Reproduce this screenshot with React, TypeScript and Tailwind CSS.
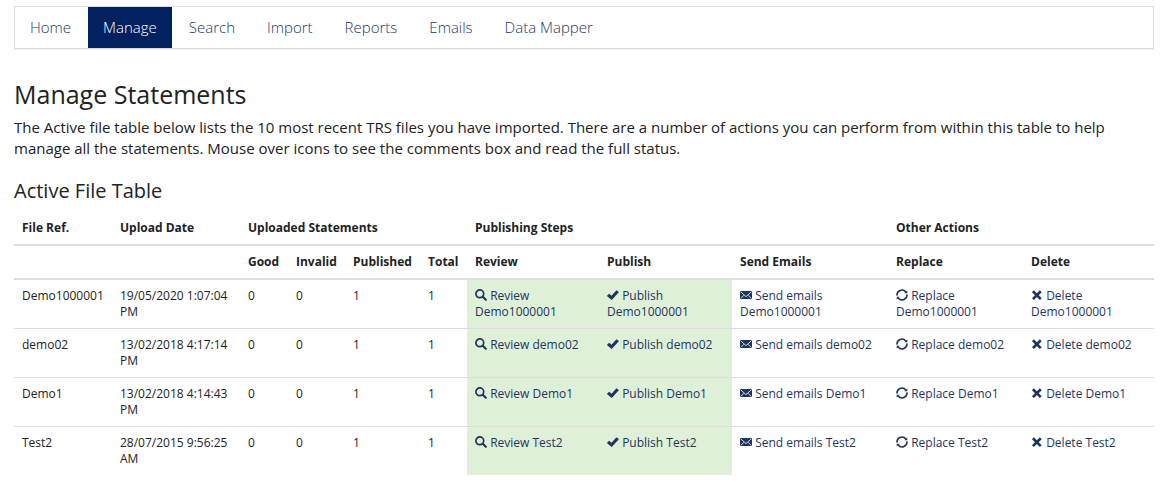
import type { ReactNode } from 'react';
import clsx from 'clsx';

const navItems = ['Home', 'Manage', 'Search', 'Import', 'Reports', 'Emails', 'Data Mapper'];

interface StatementFile {
  ref: string;
  uploaded: string;
  good: number;
  invalid: number;
  published: number;
  total: number;
}

const files: StatementFile[] = [
  { ref: 'Demo1000001', uploaded: '19/05/2020 1:07:04 PM', good: 0, invalid: 0, published: 1, total: 1 },
  { ref: 'demo02', uploaded: '13/02/2018 4:17:14 PM', good: 0, invalid: 0, published: 1, total: 1 },
  { ref: 'Demo1', uploaded: '13/02/2018 4:14:43 PM', good: 0, invalid: 0, published: 1, total: 1 },
  { ref: 'Test2', uploaded: '28/07/2015 9:56:25 AM', good: 0, invalid: 0, published: 1, total: 1 },
];

function Icon({ children }: { children: ReactNode }) {
  return (
    <svg viewBox="0 0 12 12" className="inline-block w-3 h-3 align-[-1px]" fill="currentColor" aria-hidden="true">
      {children}
    </svg>
  );
}

const icons = {
  search: (
    <Icon>
      <circle cx="4.8" cy="4.8" r="3.9" fill="none" stroke="currentColor" strokeWidth="1.7" />
      <path d="M7.8 7.8 10.8 10.7" stroke="currentColor" strokeWidth="2.2" strokeLinecap="round" />
    </Icon>
  ),
  check: (
    <Icon>
      <path d="M.2 6.6 1.9 4.9Q2.2 4.6 2.5 4.9L4.5 6.7 9.2 1.6Q9.5 1.3 9.8 1.5L11.6 2.8Q11.9 3.1 11.6 3.4L5 10.7Q4.6 11 4.3 10.7L.2 7.2Q0 6.9.2 6.6Z" />
    </Icon>
  ),
  mail: (
    <Icon>
      <path d="M0 2H12V10H0Z" />
      <path d="M.4 2.6 6 7.6 11.6 2.6M.6 9.6 4 6.2M11.4 9.6 8 6.2" fill="none" stroke="white" strokeWidth=".8" />
    </Icon>
  ),
  refresh: (
    <Icon>
      <path d="M1.1 6.6A4.9 4.9 0 0 1 9.8 2.9M10.9 5.4A4.9 4.9 0 0 1 2.2 9.1" fill="none" stroke="currentColor" strokeWidth="1.6" />
      <path d="M11.3 1.6V4.2H8.2ZM.7 10.4V7.8H3.8Z" />
    </Icon>
  ),
  remove: (
    <Icon>
      <path d="M1.9 2.2 9.8 10.1M9.8 2.2 1.9 10.1" stroke="currentColor" strokeWidth="2.7" />
    </Icon>
  ),
};

const actions = [
  { label: 'Review', icon: icons.search, step: true },
  { label: 'Publish', icon: icons.check, step: true },
  { label: 'Send emails', icon: icons.mail, step: false },
  { label: 'Replace', icon: icons.refresh, step: false },
  { label: 'Delete', icon: icons.remove, step: false },
];

const subHeadings = ['', '', 'Good', 'Invalid', 'Published', 'Total', 'Review', 'Publish', 'Send Emails', 'Replace', 'Delete'];

function NavBar() {
  return (
    <nav className="border border-[#ddd] shadow-[0_1px_1px_rgba(0,0,0,0.05)]">
      <ul className="flex flex-wrap gap-0.5">
        {navItems.map((item) => (
          <li key={item}>
            <a
              href="#"
              className={clsx(
                'block px-[15px] py-2.5 font-light',
                item === 'Manage' ? 'bg-[#002060] text-white' : 'text-[#1f355e]'
              )}
            >
              {item}
            </a>
          </li>
        ))}
      </ul>
    </nav>
  );
}

function FileRow({ file }: { file: StatementFile }) {
  const cells = [file.ref, file.uploaded, file.good, file.invalid, file.published, file.total];

  return (
    <tr className="border-t border-[#ddd] first:border-t-0">
      {cells.map((cell, i) => (
        <td key={i} className="p-2">
          {cell}
        </td>
      ))}
      {actions.map(({ label, icon, step }) => (
        <td key={label} className={clsx('p-2', step && 'bg-[#dff0d8]')}>
          <a href="#" className="text-[#1f355e]">
            {icon} {label} {file.ref}
          </a>
        </td>
      ))}
    </tr>
  );
}

function FileTable() {
  return (
    <table className="w-full table-fixed border-collapse text-left text-xs leading-4">
      <colgroup>
        <col className="w-[98px]" />
        <col className="w-[128px]" />
        <col className="w-[48px]" />
        <col className="w-[57px]" />
        <col className="w-[75px]" />
        <col className="w-[47px]" />
        <col className="w-[132px]" />
        <col className="w-[133px]" />
        <col className="w-[156px]" />
        <col className="w-[135px]" />
        <col className="w-[131px]" />
      </colgroup>
      <thead>
        <tr className="border-b-2 border-[#ddd]">
          <th className="p-2">File Ref.</th>
          <th className="p-2">Upload Date</th>
          <th className="p-2" colSpan={4}>Uploaded Statements</th>
          <th className="p-2" colSpan={3}>Publishing Steps</th>
          <th className="p-2" colSpan={2}>Other Actions</th>
        </tr>
        <tr className="border-b-2 border-[#ddd]">
          {subHeadings.map((heading, i) => (
            <th key={i} className="p-2">
              {heading}
            </th>
          ))}
        </tr>
      </thead>
      <tbody className="align-top">
        {files.map((file) => (
          <FileRow key={file.ref} file={file} />
        ))}
      </tbody>
    </table>
  );
}

export default function App() {
  return (
    <div className="bg-white pt-1.5 pb-6 pl-3.5 pr-[22px] font-['Open_Sans',sans-serif] text-[15px] leading-[21px] text-[#222]">
      <NavBar />
      <main>
        <h1 className="mt-[30px] mb-2 text-[25px] leading-[30px]">Manage Statements</h1>
        <p className="mb-5">
          The Active file table below lists the 10 most recent TRS files you have imported. There are a number of
          actions you can perform from within this table to help manage all the statements. Mouse over icons to see
          the comments box and read the full status.
        </p>
        <h2 className="mb-[9px] text-xl leading-6">Active File Table</h2>
        <FileTable />
      </main>
    </div>
  );
}
